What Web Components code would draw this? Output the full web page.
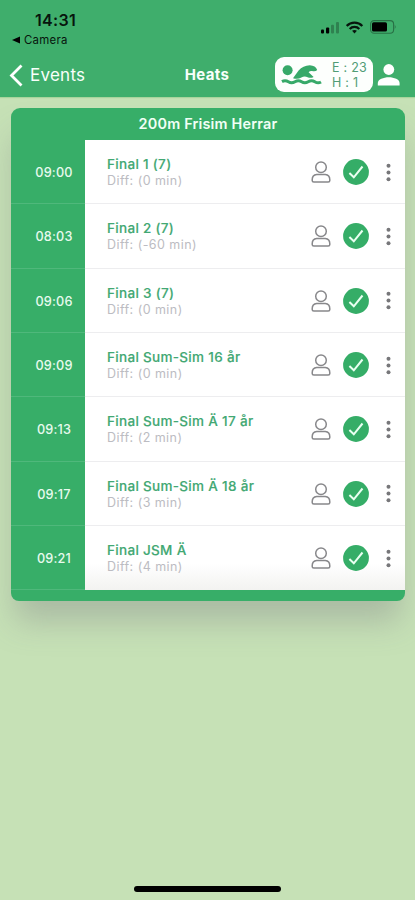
<!DOCTYPE html>
<html lang="en">
<head>
<meta charset="utf-8">
<title>Heats</title>
<style>
html,body{margin:0;height:100%;background:#c6e1b6;overflow:hidden}
body{font-family:Inter,"Liberation Sans",sans-serif}
</style>
</head>
<body>
<heats-app></heats-app>
<script>
const define = (name, html, setup) => customElements.define(name, class extends HTMLElement {
  connectedCallback() {
    if (this.shadowRoot) return;
    const t = document.createElement('template');
    t.innerHTML = html;
    this.attachShadow({mode: 'open'}).appendChild(t.content.cloneNode(true));
    if (setup) setup(this, this.shadowRoot);
  }
});

define('status-bar', `
<style>
:host{display:flex;justify-content:space-between;height:52px;box-sizing:border-box;padding:11px 18px 0 12px;color:#07150d}
.time{font-size:16px;line-height:18px;font-weight:600;padding-left:23px;letter-spacing:.35px}
.back{display:flex;align-items:center;gap:4px;font-size:11.4px;line-height:14px;margin-top:4px;letter-spacing:.3px}
.icons{display:flex;gap:6px;padding-top:8px;align-items:center;height:16px}
</style>
<div><div class="time">14:31</div>
<div class="back"><svg width="8" height="8"><path d="M8 .5v7L0 4z"/></svg><span>Camera</span></div></div>
<div class="icons">
<svg width="19" height="13" viewBox="0 0 19 13"><rect x="0" y="8.5" width="3" height="4" rx="1"/><rect x="5" y="6.5" width="3.2" height="6" rx="1"/><g opacity=".25"><rect x="10" y="3.8" width="3" height="8.7" rx="1"/><rect x="15" y="1" width="3" height="11.5" rx="1"/></g></svg>
<svg width="18" height="13" viewBox="0 0 18 13" fill="none" stroke="#07150d" stroke-width="2.2"><path d="M.7 4.9C4.9.5 12.1.5 16.3 4.9"/><path d="M3.7 7.9C6.2 5.3 10.8 5.3 13.3 7.9"/><path d="M6.1 9.7C7.5 8.6 9.5 8.6 10.9 9.7L8.5 12.4z" fill="#07150d" stroke="none"/></svg>
<svg width="27" height="14" viewBox="0 0 27 14"><rect x=".6" y=".6" width="23" height="12.6" rx="3.5" fill="none" stroke="#07150d" stroke-opacity=".4" stroke-width="1.1"/><rect x="2" y="2.2" width="15" height="9.4" rx="1.6"/><path d="M24.8 4.5q1.6 2.4 0 4.8z" opacity=".4"/></svg>
</div>`);

define('current-heat', `
<style>
:host{display:flex;align-items:center;box-sizing:border-box;width:98px;height:35px;border-radius:9px;background:#fdfffd;padding-left:6px;color:#519c75;font-size:12.5px;line-height:15.5px;letter-spacing:.25px}
svg{flex:none;margin-right:10px}
.lines{white-space:pre;padding-top:1px}
</style>
<svg width="41" height="24" viewBox="0 0 41 24"><circle cx="6.6" cy="7.3" r="5" fill="#37a969"/><path d="M12 15.2L17.6 7.4Q22 2.6 28.8 2.3Q34.6 2.6 36.2 7Q34.4 9 31 8Q28.8 7.8 27.6 9.2L32.6 14Q29.6 15.6 26.6 14.2Q23.4 12.8 20.4 14.5Q16.4 16.8 12 15.2Z" fill="#37a969"/><path d="M1 18.6Q4.2 16.8 7.4 18.8T14 18.7T20.6 18.7T27.2 18.7T33.8 18.7T40 19" fill="none" stroke="#37a969" stroke-width="3"/></svg>
<div class="lines"><div><slot name="event"></slot></div><div><slot name="heat"></slot></div></div>`);

define('nav-bar', `
<style>
:host{display:grid;grid-template-columns:1fr auto 1fr;align-items:center;height:45px;padding:0 15px 0 9px;box-sizing:border-box;color:#f8fffa}
.left{display:flex;align-items:center;gap:7px;font-size:17px;letter-spacing:.25px;padding-top:1px}
.title{font-size:15px;font-weight:700;letter-spacing:.3px;padding-left:5px}
.right{display:flex;align-items:center;justify-content:flex-end;gap:4px}
</style>
<div class="left"><svg width="14" height="23" viewBox="0 0 14 23"><path d="M12.5 1.5L2.5 11.5L12.5 21.5" fill="none" stroke="#fff" stroke-width="2.8"/></svg><slot name="back"></slot></div>
<div class="title"><slot></slot></div>
<div class="right"><slot name="status"></slot><svg width="23" height="22" viewBox="0 0 23 22" fill="#fff"><circle cx="11.8" cy="5.5" r="5.4"/><path d="M.8 21.6v-2.6C.8 15.5 6.5 13.3 11.8 13.3S22.6 15.5 22.6 19v2.6z"/></svg></div>`);

define('heat-row', `
<style>
:host{display:grid;grid-template-columns:74px 1fr;flex:1;min-height:0}
.time{display:flex;align-items:center;justify-content:center;padding:2px 0 0 12px;color:#e7faee;font-size:12.7px;font-weight:500;letter-spacing:.2px;border-bottom:1px solid #4fb87b}
.body{display:flex;align-items:center;background:var(--row-bg,#fff);border-bottom:1px solid var(--row-line,#ededef);padding:1px 14.5px 0 22px}
.text{flex:1;white-space:nowrap}
.name{font-size:13.5px;line-height:17px;font-weight:500;color:#42a873;letter-spacing:.31px;-webkit-text-stroke:.15px #42a873}
.diff{font-size:12.5px;line-height:15px;color:#bcbcc2;letter-spacing:.45px}
svg{flex:none;display:block}
.person{margin-right:12px}.check{margin-right:17px}
</style>
<div class="time"><slot name="time"></slot></div>
<div class="body"><div class="text"><div class="name"><slot></slot></div><div class="diff"><slot name="diff"></slot></div></div>
<svg class="person" width="20" height="22" viewBox="0 0 20 22" fill="none" stroke="#88888b" stroke-width="1.5"><circle cx="10" cy="6.2" r="5.3"/><path d="M5.7 13.5H14.3Q18.8 14 18.8 18.8V19.5Q18.8 21 17.2 21H2.8Q1.2 21 1.2 19.5V18.8Q1.2 14 5.7 13.5Z"/></svg>
<svg class="check" width="26" height="26" viewBox="0 0 26 26"><circle cx="13" cy="13" r="12.9" fill="#35ad67"/><path d="M6.4 14L10.8 18.3L19.5 7.5" fill="none" stroke="#e9fff1" stroke-width="2"/></svg>
<svg width="5" height="19" viewBox="0 0 5 19" fill="#77777a"><circle cx="2.5" cy="2.7" r="2"/><circle cx="2.5" cy="9.5" r="2"/><circle cx="2.5" cy="16.3" r="2"/></svg></div>`);

define('heat-card', `
<style>
:host{display:flex;flex-direction:column;margin:11px 10px 0 11px;height:493px;border-radius:9px 9px 8px 8px;background:#37ae68;box-shadow:0 24px 32px -4px rgba(115,110,125,.34);overflow:hidden}
.title{height:32px;line-height:32px;text-align:center;color:#f1fff5;font-size:14.4px;font-weight:600;letter-spacing:.2px}
.rows{height:450.3px;display:flex;flex-direction:column}
</style>
<div class="title"><slot name="title"></slot></div><div class="rows"><slot></slot></div>`);

define('heats-app', `
<style>
:host{display:flex;flex-direction:column;height:900px;width:415px;background:#c6e1b6}
header{background:#3fae6c;height:97px;flex:none;box-shadow:0 1px 1px #a8d49c}
.space{flex:1}
.home{width:147px;height:6px;border-radius:3px;background:#000;margin:0 auto 8px}
heat-row:last-child{--row-bg:linear-gradient(#fff 60%,#f3f3f1);--row-line:#f3f3f1}
</style>
<header><status-bar></status-bar><nav-bar><span slot="back">Events</span>Heats<current-heat slot="status"><span slot="event">E : 23</span><span slot="heat">H : 1</span></current-heat></nav-bar></header>
<heat-card><span slot="title">200m Frisim Herrar</span></heat-card>
<div class="space"></div><div class="home"></div>`, (el, root) => {
  const card = root.querySelector('heat-card');
  for (const [time, name, diff] of [
    ['09:00', 'Final 1 (7)', '0'], ['08:03', 'Final 2 (7)', '-60'], ['09:06', 'Final 3 (7)', '0'],
    ['09:09', 'Final Sum-Sim 16 år', '0'], ['09:13', 'Final Sum-Sim Ä 17 år', '2'],
    ['09:17', 'Final Sum-Sim Ä 18 år', '3'], ['09:21', 'Final JSM Ä', '4']]) {
    const row = document.createElement('heat-row');
    row.innerHTML = `<span slot="time">${time}</span>${name}<span slot="diff">Diff: (${diff} min)</span>`;
    card.appendChild(row);
  }
});
</script>
</body>
</html>
